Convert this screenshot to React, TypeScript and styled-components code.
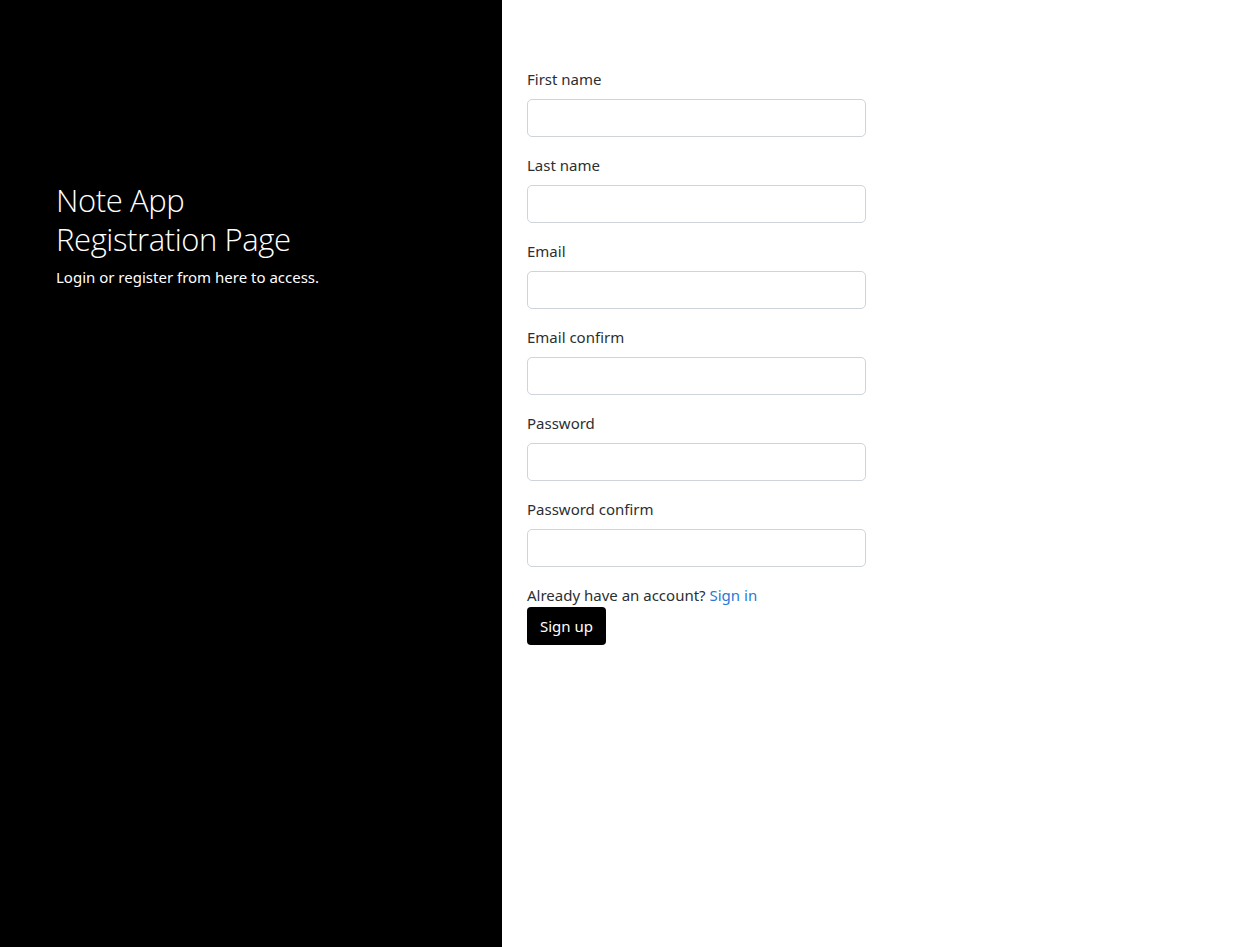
import React from "react";
import styled, { createGlobalStyle } from "styled-components";

const Global = createGlobalStyle`
  html, body { margin: 0; padding: 0; }
  body {
    font-family: "Noto Sans", "Open Sans", "Liberation Sans", sans-serif;
    font-size: 16px;
    line-height: 1.5;
    color: #212529;
    background: #fff;
  }
  * { box-sizing: border-box; }
`;

const Page = styled.div`
  display: flex;
  min-height: 947px;
`;

const Sidebar = styled.aside`
  width: 502px;
  flex-shrink: 0;
  background: #000;
  color: #fff;
  padding: 181px 40px 0 56px;
`;

const Title = styled.h2`
  margin: 0 0 7px;
  font-family: "Open Sans", "Noto Sans", sans-serif;
  font-weight: 300;
  font-size: 31px;
  line-height: 39px;
  letter-spacing: -0.4px;
`;

const Subtitle = styled.p`
  margin: 0;
  font-size: 15px;
  line-height: 22px;
`;

const Main = styled.main`
  flex: 1;
  padding: 67px 25px;
`;

const Form = styled.form`
  width: 339px;
`;

const Field = styled.div`
  margin-bottom: 16px;
`;

const Label = styled.label`
  display: block;
  margin-bottom: 8px;
  font-size: 15px;
  line-height: 24px;
  color: #2b2f33;
`;

const Input = styled.input`
  display: block;
  width: 100%;
  height: 38px;
  padding: 6px 12px;
  font-size: 16px;
  border: 1px solid #ced4da;
  border-radius: 5px;
  background: #fff;
  outline: none;
`;

const Note = styled.p`
  margin: 0;
  font-size: 15px;
  line-height: 24px;
  color: #2b2f33;
`;

const Link = styled.a`
  color: #2a78d6;
  text-decoration: none;
`;

const Button = styled.button`
  display: inline-block;
  height: 38px;
  padding: 0 13px;
  border: none;
  border-radius: 4px;
  background: #000;
  color: #fff;
  font-family: inherit;
  font-size: 15px;
  cursor: pointer;
`;

const fields: { label: string; type: string }[] = [
  { label: "First name", type: "text" },
  { label: "Last name", type: "text" },
  { label: "Email", type: "email" },
  { label: "Email confirm", type: "email" },
  { label: "Password", type: "password" },
  { label: "Password confirm", type: "password" },
];

export default function App() {
  return (
    <>
      <Global />
      <Page>
        <Sidebar>
          <Title>
            Note App
            <br />
            Registration Page
          </Title>
          <Subtitle>Login or register from here to access.</Subtitle>
        </Sidebar>
        <Main>
          <Form onSubmit={(e) => e.preventDefault()}>
            {fields.map((f) => (
              <Field key={f.label}>
                <Label>{f.label}</Label>
                <Input type={f.type} />
              </Field>
            ))}
            <Note>
              Already have an account? <Link href="#">Sign in</Link>
            </Note>
            <Button type="submit">Sign up</Button>
          </Form>
        </Main>
      </Page>
    </>
  );
}
